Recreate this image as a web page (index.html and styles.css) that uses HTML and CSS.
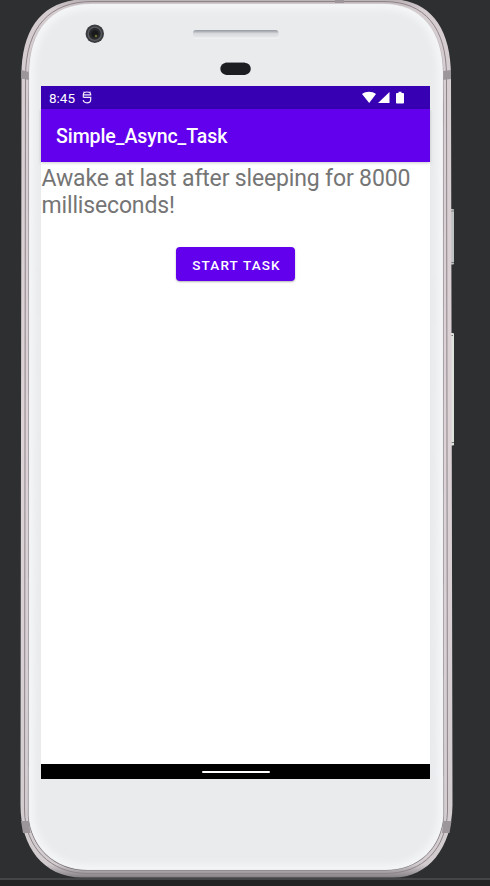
FILE: index.html
```html
<!DOCTYPE html>
<html lang="en">
<head>
<meta charset="utf-8">
<title>Simple_Async_Task</title>
<link rel="stylesheet" href="styles.css">
</head>
<body>
<div class="emulator">
  <svg class="device" width="490" height="886" viewBox="0 0 490 886" aria-hidden="true">
    <defs>
      <linearGradient id="metal" x1="0" y1="0" x2="0" y2="1">
        <stop offset="0" stop-color="#b9b0b4"/><stop offset=".012" stop-color="#d5ccd0"/>
        <stop offset=".5" stop-color="#ddd3d7"/><stop offset=".985" stop-color="#d2cccf"/><stop offset="1" stop-color="#858085"/>
      </linearGradient>
      <linearGradient id="edge" x1="0" y1="0" x2="0" y2="1">
        <stop offset="0" stop-color="#d9d4d7"/><stop offset=".06" stop-color="#bcb5b9"/><stop offset=".12" stop-color="#8d858a"/><stop offset="1" stop-color="#777177"/>
      </linearGradient>
      <linearGradient id="grille" x1="0" y1="0" x2="0" y2="1">
        <stop offset="0" stop-color="#9699a0"/><stop offset=".25" stop-color="#b4b7bd"/><stop offset=".45" stop-color="#d6d8dc"/><stop offset="1" stop-color="#e6e7e9"/>
      </linearGradient>
      <filter id="soft" x="-10%" y="-10%" width="120%" height="120%"><feGaussianBlur stdDeviation="3"/></filter>
      <clipPath id="faceClip"><path d="M29 72C30 31 50 4 92 4H383C422 4 442 31 443 72L443.500 816C441 847 420 870 385 870H88C53 870 31 846 28.500 816Z"/></clipPath>
    </defs>
    <rect class="desk-line" x="0" y="878" width="490" height="2"/>
    <rect class="desk-floor" x="0" y="880" width="490" height="6"/>
    <rect class="key" x="449" y="209" width="5" height="55.500" rx="1"/>
    <rect class="key key-light" x="449" y="333" width="5" height="112.500" rx="1"/>
    <path class="key-ends" d="M451 211h3M451 262.500h3M451 335.500h2M451 442.500h3"/>
    <path fill="url(#metal)" d="M21.500 76C21.500 25 45 -1 88 -1H389C428 -1 451 25 451 76L452.500 805C452 848 428 877.500 394 877.500H82C43 877.500 20.500 846 20.500 805Z"/>
    <path class="seam" d="M25.500 76C26 27 50 1.500 92 1.500H384C425 1.500 446.500 28 446.500 76L447.500 812C446 848 424 873.500 385 873.500H88C50 873.500 25 847 24.500 810Z"/>
    <path class="band" d="M21.200 70l7.800 2v8l-8-1.500zM443 71l8-1v9l-8 1zM21 821l7.500 0 2 12-7.500 0zM443.500 821l8 0-2 12-7.500 0zM335 0h9v3h-9z"/>
    <path class="face" stroke="url(#edge)" d="M29 72C30 31 50 4 92 4H383C422 4 442 31 443 72L443.500 816C441 847 420 870 385 870H88C53 870 31 846 28.500 816Z"/>
    <g clip-path="url(#faceClip)">
      <path class="face-glow" filter="url(#soft)" d="M29 72C30 31 50 4 92 4H383C422 4 442 31 443 72L443.500 816C441 847 420 870 385 870H88C53 870 31 846 28.500 816Z"/>
    </g>
    <circle cx="94.800" cy="33.800" r="9.200" fill="#393b3e"/>
    <circle cx="94.800" cy="33.800" r="6.600" fill="#292a2d" stroke="#5c5e62" stroke-width="1.300"/>
    <circle cx="95" cy="33.800" r="3.500" fill="#17191a"/>
    <circle cx="96" cy="36" r="1.300" fill="#686b2d"/>
    <rect x="193" y="31" width="86" height="8" rx="3.500" fill="#eff0f1"/>
    <rect x="193" y="30" width="85.500" height="7.500" rx="3" fill="url(#grille)"/>
    <rect x="225" y="62" width="20" height="2" fill="#b6b8bb"/>
    <rect x="220.300" y="62.700" width="30.500" height="12.200" rx="6.100" fill="#1b1d20"/>
  </svg>
  <main class="screen">
    <header class="status">
      <span class="clock">8:45</span>
      <svg class="debug" width="10" height="13" viewBox="0 0 10 13" aria-hidden="true">
        <path d="M1.300 6.300V3.800C1.300 1.800 2.700 1 5 1S8.700 1.800 8.700 3.800V4.500M1.300 6.300H8.700V8.500C8.700 10.800 7.300 11.800 5 11.800S1.500 10.800 1.200 9M1.500 3.800H8.500"/>
        <path class="eyes" d="M1.300 1.200h1.500M7.200 1.200h1.500"/>
      </svg>
      <svg class="signals" width="44" height="13" viewBox="0 0 44 13" aria-hidden="true">
        <path d="M0 3C4 0 10 0 14 3L7.200 12ZM27.500 1V12H16ZM34.800 2H36.500V.8H39.500V2H41.200Q42 2 42 3V11.500Q42 12.500 41.200 12.500H34.800Q34 12.500 34 11.500V3Q34 2 34.800 2Z"/>
      </svg>
    </header>
    <div class="appbar"><h1 class="title">Simple_Async_Task</h1></div>
    <section class="content">
      <p class="message">Awake at last after sleeping for 8000<br>milliseconds!</p>
      <button class="start">START TASK</button>
    </section>
    <footer class="nav"><span class="handle"></span></footer>
  </main>
</div>
</body>
</html>
```
FILE: styles.css
```css
* { box-sizing: border-box; }
body { margin: 0; background: #2d2f31; font-family: Roboto, "Liberation Sans", sans-serif; }
.emulator { position: relative; width: 490px; height: 886px; padding: 86px 60px 107px 41px; overflow: hidden; }
.device { position: absolute; inset: 0; }
.desk-line { fill: #444546; }
.desk-floor { fill: #222223; }
.key { fill: #bfc2c3; }
.key-light { fill: #dfe3dd; }
.key-ends { stroke: #777978; stroke-width: 1; }
.seam { fill: none; stroke: #8d858a; stroke-width: 1; }
.band { fill: #9c969b; }
.face { fill: #e9ebed; stroke-width: 1.2; }
.face-glow { fill: none; stroke: #f4f5f7; stroke-width: 11; }
.screen { position: relative; display: flex; flex-direction: column; width: 389px; height: 693px; background: #fff; }
.status { display: flex; align-items: center; height: 23px; padding: 0 24px 0 8px; background: #3700b3; color: #fff; }
.clock { width: 26px; padding-top: 1px; font-size: 13.5px; line-height: 23px; white-space: nowrap; }
.debug { margin-left: 7px; fill: none; stroke: #f1eafa; stroke-width: 1.2; }
.eyes { stroke-width: 1; }
.signals { margin-left: auto; fill: #fff; }
.appbar { display: flex; align-items: center; height: 53px; padding: 3px 0 0 15px; background: #6200ee; box-shadow: 0 1px 3px rgba(0,0,0,.2); }
.title { margin: 0; color: #fff; font-size: 19.5px; line-height: 24px; font-weight: 500; letter-spacing: -.07px; }
.content { flex: 1; display: flex; flex-direction: column; align-items: center; }
.message { align-self: stretch; margin: 3px 0 0 .5px; color: #757575; font-size: 23px; line-height: 27px; letter-spacing: -.155px; white-space: nowrap; }
.start { width: 119px; height: 34px; margin: 28px 0 0; padding: 2px 0 0 2px; border: 0; border-radius: 4px; background: #6200ee; color: #fff; font: 500 13.5px/32px Roboto, sans-serif; letter-spacing: 1.15px; box-shadow: 0 1px 2px rgba(0,0,0,.3); }
.nav { display: flex; justify-content: center; align-items: center; height: 15px; background: #000; }
.handle { width: 68px; height: 2px; border-radius: 1px; background: #fff; }
```
